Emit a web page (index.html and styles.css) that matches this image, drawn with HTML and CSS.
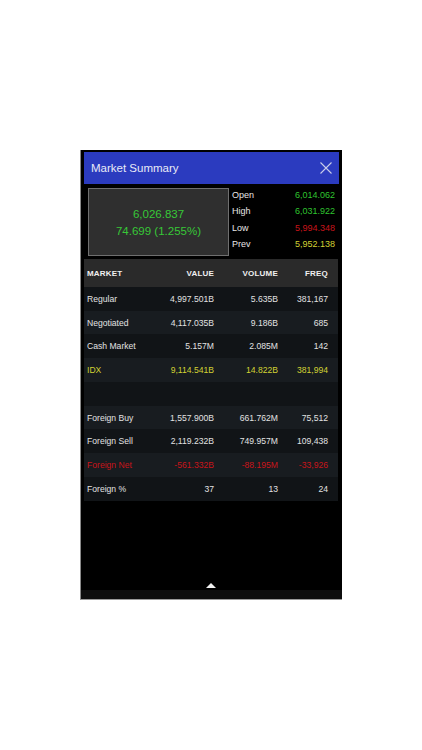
FILE: index.html
```html
<!DOCTYPE html>
<html>
<head>
<meta charset="utf-8">
<link rel="stylesheet" href="styles.css">
</head>
<body>
<div class="frame">
  <div class="header">
    <span class="title">Market Summary</span>
    <svg class="close" width="12" height="12" viewBox="0 0 12 12"><path d="M0.5 0.5L11.5 11.5M11.5 0.5L0.5 11.5" stroke="#c9cdea" stroke-width="1.1" fill="none"/></svg>
  </div>
  <div class="summary">
    <div class="index-box">
      <div class="big">6,026.837</div>
      <div class="big">74.699 (1.255%)</div>
    </div>
    <div class="ohlc">
      <div class="oline"><span>Open</span><span class="green">6,014.062</span></div>
      <div class="oline"><span>High</span><span class="green">6,031.922</span></div>
      <div class="oline"><span>Low</span><span class="red">5,994.348</span></div>
      <div class="oline"><span>Prev</span><span class="yellow">5,952.138</span></div>
    </div>
  </div>
  <div class="table">
    <div class="row head"><span>MARKET</span><span>VALUE</span><span>VOLUME</span><span>FREQ</span></div>
    <div class="row dark"><span>Regular</span><span>4,997.501B</span><span>5.635B</span><span>381,167</span></div>
    <div class="row light"><span>Negotiated</span><span>4,117.035B</span><span>9.186B</span><span>685</span></div>
    <div class="row dark"><span>Cash Market</span><span>5.157M</span><span>2.085M</span><span>142</span></div>
    <div class="row light yellow"><span>IDX</span><span>9,114.541B</span><span>14.822B</span><span>381,994</span></div>
    <div class="row dark blank"></div>
    <div class="row light"><span>Foreign Buy</span><span>1,557.900B</span><span>661.762M</span><span>75,512</span></div>
    <div class="row dark"><span>Foreign Sell</span><span>2,119.232B</span><span>749.957M</span><span>109,438</span></div>
    <div class="row light red"><span>Foreign Net</span><span>-561.332B</span><span>-88.195M</span><span>-33,926</span></div>
    <div class="row dark"><span>Foreign %</span><span>37</span><span>13</span><span>24</span></div>
  </div>
  <div class="spacer"></div>
  <div class="handle"><svg width="10" height="5" viewBox="0 0 10 5"><path d="M5 0L10 5H0Z" fill="#f2f2f2"/></svg></div>
  <div class="strip"></div>
</div>
</body>
</html>
```
FILE: styles.css
```css
html, body {
  margin: 0;
  padding: 0;
  background: #fff;
}
body {
  font-family: "Liberation Sans", Arial, sans-serif;
}
.frame {
  margin: 150px 0 0 80px;
  width: 255px;
  height: 447px;
  background: #000;
  padding: 2px 3px 0 3px;
  border-left: 1px solid #8a8a8a;
  border-bottom: 1px solid #9a9a9a;
  box-sizing: content-box;
  display: flex;
  flex-direction: column;
}
.header {
  height: 32px;
  background: #2b3bbf;
  display: flex;
  align-items: center;
  justify-content: space-between;
  padding: 0 7px 0 7px;
  flex-shrink: 0;
}
.title {
  color: #e8eaf6;
  font-size: 11.5px;
}
.close {
  display: block;
}
.summary {
  display: flex;
  height: 75px;
  flex-shrink: 0;
}
.index-box {
  margin: 4px 0 0 4px;
  width: 139px;
  height: 66px;
  border: 1px solid #6f6f6f;
  background: #2f2f2f;
  display: flex;
  flex-direction: column;
  justify-content: center;
  align-items: center;
  gap: 3px;
}
.big {
  color: #37c837;
  font-size: 11.5px;
  line-height: 14px;
}
.ohlc {
  flex: 1;
  padding: 3px 4px 0 3px;
  display: flex;
  flex-direction: column;
}
.oline {
  display: flex;
  justify-content: space-between;
  height: 16.3px;
  align-items: center;
  font-size: 9px;
  color: #e6e6e6;
}
.green { color: #2fc42f; }
.red { color: #c8141a; }
.yellow { color: #d2d233; }
.table {
  display: flex;
  flex-direction: column;
  flex-shrink: 0;
  width: 254px;
}
.row {
  display: grid;
  grid-template-columns: 66px 61px 64px 50px;
  padding: 0 10px 0 3px;
  height: 23.7px;
  align-items: center;
  font-size: 8.6px;
  color: #e2e2e2;
}
.row span:not(:first-child) {
  text-align: right;
}
.row.head {
  height: 28px;
  background: #2a2a2a;
  font-weight: bold;
  font-size: 8px;
  letter-spacing: 0.2px;
  color: #f0f0f0;
}
.row.dark { background: #111417; }
.row.light { background: #181c20; }
.row.blank { height: 24px; }
.row.yellow { color: #d2d233; }
.row.red { color: #c8141a; }
.spacer { flex: 1; }
.handle {
  height: 7px;
  display: flex;
  justify-content: center;
  align-items: flex-start;
  padding-right: 1px;
}
.handle svg { display: block; }
.strip {
  height: 9px;
  background: #0e0e0e;
  margin: 0 -3px;
}
```
